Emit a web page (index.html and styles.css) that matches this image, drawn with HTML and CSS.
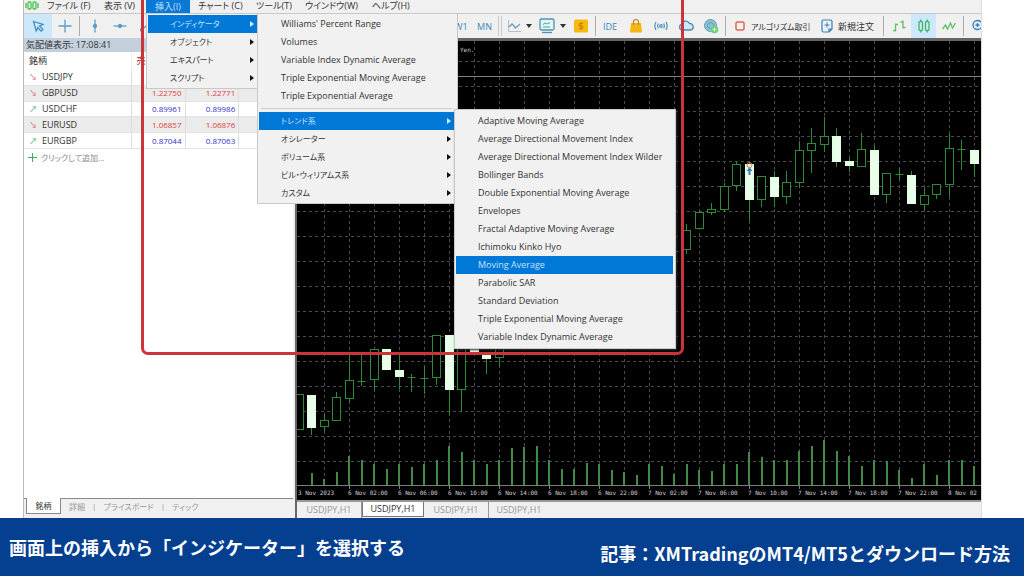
FILE: index.html
```html
<!DOCTYPE html>
<html lang="ja">
<head>
<meta charset="utf-8">
<title>画面上の挿入から「インジケーター」を選択する</title>
<link rel="stylesheet" href="styles.css">
</head>
<body>
<main class="app">
  <nav class="menubar">
    <svg class="logo" width="14" height="12" viewBox="0 0 14 12" fill="none" stroke="#45c14f" stroke-width="1.3"><rect x="3" y="2" width="3" height="7" rx="1"/><rect x="8" y="2" width="3" height="7" rx="1"/><path d="M1 3v5M13 3v5"/></svg>
    <button class="menu-title m-file">ファイル (F)</button>
    <button class="menu-title m-view">表示 (V)</button>
    <div class="menu-slot">
      <button class="menu-title open">挿入(I)</button>
      <ul class="menu menu-insert">
        <li class="has-sub"><button class="item active sub ja">インディケータ</button>
          <ul class="menu menu-indicator">
            <li><button class="item">Williams' Percent Range</button></li>
            <li><button class="item">Volumes</button></li>
            <li><button class="item">Variable Index Dynamic Average</button></li>
            <li><button class="item">Triple Exponential Moving Average</button></li>
            <li><button class="item">Triple Exponential Average</button></li>
            <li class="rule"></li>
            <li class="has-sub"><button class="item active sub ja">トレンド系</button>
              <ul class="menu menu-trend">
                <li><button class="item">Adaptive Moving Average</button></li>
                <li><button class="item">Average Directional Movement Index</button></li>
                <li><button class="item">Average Directional Movement Index Wilder</button></li>
                <li><button class="item">Bollinger Bands</button></li>
                <li><button class="item">Double Exponential Moving Average</button></li>
                <li><button class="item">Envelopes</button></li>
                <li><button class="item">Fractal Adaptive Moving Average</button></li>
                <li><button class="item">Ichimoku Kinko Hyo</button></li>
                <li><button class="item active">Moving Average</button></li>
                <li><button class="item">Parabolic SAR</button></li>
                <li><button class="item">Standard Deviation</button></li>
                <li><button class="item">Triple Exponential Moving Average</button></li>
                <li><button class="item">Variable Index Dynamic Average</button></li>
              </ul>
            </li>
            <li><button class="item sub ja">オシレーター</button></li>
            <li><button class="item sub ja">ボリューム系</button></li>
            <li><button class="item sub ja">ビル・ウィリアムス系</button></li>
            <li><button class="item sub ja">カスタム</button></li>
          </ul>
        </li>
        <li><button class="item sub ja">オブジェクト</button></li>
        <li><button class="item sub ja">エキスパート</button></li>
        <li><button class="item sub ja">スクリプト</button></li>
      </ul>
    </div>
    <button class="menu-title m-chart">チャート (C)</button>
    <button class="menu-title m-tool">ツール(T)</button>
    <button class="menu-title m-window">ウインドウ(W)</button>
    <button class="menu-title m-help">ヘルプ(H)</button>
  </nav>

  <div class="toolbar">
    <div class="tools-left">
      <button class="tool on" aria-label="カーソル"><svg width="16" height="16" viewBox="0 0 16 16" fill="none" stroke="#3f8fc4" stroke-width="1.300"><path d="M3.500 3.500l9.500 3-3.500 1.700 3.500 3.300-1.800 1.700-3.400-3.500-1.600 3.300z"/></svg></button>
      <button class="tool" aria-label="十字カーソル"><svg width="16" height="16" viewBox="0 0 16 16" stroke="#5b9cc8" stroke-width="1.300"><path d="M8 1.500v13M1.500 8h13"/></svg></button>
      <span class="bar"></span>
      <button class="tool" aria-label="垂直線"><svg width="16" height="16" viewBox="0 0 16 16" stroke="#5b9cc8" stroke-width="1.300" fill="#5b9cc8"><path d="M8 1.500v13"/><circle cx="8" cy="8" r="1.500"/></svg></button>
      <button class="tool" aria-label="水平線"><svg width="16" height="16" viewBox="0 0 16 16" stroke="#5b9cc8" stroke-width="1.300" fill="#5b9cc8"><path d="M1.500 8h13"/><circle cx="8" cy="8" r="1.500"/></svg></button>
      <button class="tool" aria-label="トレンドライン"><svg width="16" height="16" viewBox="0 0 16 16" stroke="#5b9cc8" stroke-width="1.300" fill="#5b9cc8"><path d="M4 13L14 3"/><circle cx="5" cy="12" r="1.500"/></svg></button>
    </div>
    <div class="tools-right">
      <button class="tool period">W1</button>
      <button class="tool period">MN</button>
      <span class="bar double"></span>
      <button class="tool drop" aria-label="チャート種類"><svg width="16" height="16" viewBox="0 0 16 16" fill="none"><path d="M2.500 2v11.500H15" stroke="#b9bec2"/><path d="M3 9l3-3 2 2 1.500 2L14 6" stroke="#6c9cba" stroke-width="1.300"/></svg></button>
      <button class="tool drop" aria-label="テンプレート"><svg width="18" height="18" viewBox="0 0 18 18" fill="none" stroke="#4d93b5" stroke-width="1.300"><rect x="2" y="2" width="14" height="11" rx="1.500" fill="#e4f3f8"/><path d="M5 7.500l2-1.500 2 1 3-1.500M5 10h7" stroke="#4caf85" stroke-width="1"/><path d="M4 15.500h10"/></svg></button>
      <button class="tool" aria-label="口座"><svg width="16" height="16" viewBox="0 0 16 16"><rect x="1" y="1.500" width="14" height="13" rx="1.500" fill="#f5b90f"/><path d="M10 5.500H7.200a1.200 1.200 0 0 0 0 2.500h1.600a1.200 1.200 0 0 1 0 2.500H6M8 4v8" fill="none" stroke="#c67b05"/></svg></button>
      <span class="bar"></span>
      <button class="tool period">IDE</button>
      <button class="tool" aria-label="マーケット"><svg width="16" height="16" viewBox="0 0 16 16"><path d="M3 5h10l1 9.500H2z" fill="#f4b70f"/><path d="M5.500 7V4a2.500 2.500 0 0 1 5 0v3" fill="none" stroke="#b8891a" stroke-width="1.200"/></svg></button>
      <button class="tool" aria-label="シグナル"><svg width="16" height="16" viewBox="0 0 16 16" fill="none" stroke="#4c91bd" stroke-width="1.200"><circle cx="8" cy="8" r="1.300"/><path d="M5.300 5.500q-1.500 2.500 0 5M10.700 5.500q1.500 2.500 0 5M3 4q-2.300 4 0 8M13 4q2.300 4 0 8"/></svg></button>
      <button class="tool" aria-label="クラウド"><svg width="16" height="16" viewBox="0 0 16 16" fill="#d2e7f5" stroke="#4c86b0" stroke-width="1.300"><path d="M4 12a3 3 0 0 1-.3-5.800A4.200 4.200 0 0 1 11.500 5.500a3.200 3.200 0 0 1 .8 6.500z"/></svg></button>
      <button class="tool" aria-label="VPS"><svg width="18" height="18" viewBox="0 0 18 18" fill="none"><circle cx="8.500" cy="8.500" r="6" fill="#8fc0d4" stroke="#5b9fb8"/><circle cx="8.500" cy="8.500" r="3" stroke="#5b9fb8"/><circle cx="12.500" cy="12.500" r="3.800" fill="#6ccf7a"/><path d="M10.500 12.500h4M12.500 10.500v4" stroke="#e8fbe8"/></svg></button>
      <span class="bar"></span>
      <button class="tool label ja"><svg width="14" height="14" viewBox="0 0 14 14" fill="none"><rect x="3" y="3" width="8" height="8" rx="1.500" stroke="#e0684f" stroke-width="1.500"/></svg>アルゴリズム取引</button>
      <button class="tool label"><svg width="14" height="14" viewBox="0 0 14 14" fill="none" stroke="#377fb8" stroke-width="1.200"><path d="M9 13H3.500A1.500 1.500 0 0 1 2 11.500v-9A1.500 1.500 0 0 1 3.500 1h7A1.500 1.500 0 0 1 12 2.500V10zM9 13v-3h3"/><path d="M4.500 6h5M7 3.500v5" stroke-width="1"/></svg>新規注文</button>
      <span class="bar"></span>
      <button class="tool" aria-label="バーチャート"><svg width="16" height="16" viewBox="0 0 16 16" fill="none" stroke="#5fc268" stroke-width="1.300"><path d="M4.500 5.500v8M2 12.500h2.500M4.500 6.500H7M12 2.500v8M9.500 4H12M12 9.500h2.500"/></svg></button>
      <button class="tool on" aria-label="ローソク足"><svg width="16" height="16" viewBox="0 0 16 16" fill="none" stroke="#3fb765" stroke-width="1.300"><rect x="3" y="3.500" width="3.500" height="9" rx="1"/><rect x="9.500" y="3.500" width="3.500" height="9" rx="1"/><path d="M4.750 1.500v2M4.750 12.500v2M11.250 1.500v2M11.250 12.500v2"/></svg></button>
      <button class="tool" aria-label="ラインチャート"><svg width="16" height="16" viewBox="0 0 16 16" fill="none" stroke="#5fc268" stroke-width="1.300"><path d="M1.500 11l3-4 2 4 3-6 2 5 3-5"/></svg></button>
      <span class="bar"></span>
      <button class="tool" aria-label="拡大"><svg width="16" height="16" viewBox="0 0 16 16" fill="#e1f0fa" stroke="#377fb8" stroke-width="1.300"><circle cx="7.500" cy="7" r="4.500"/><path d="M5.500 7h4M7.500 5v4M11 10.500l3.500 3.500"/></svg></button>
    </div>
  </div>

  <div class="workspace">
    <section class="watch">
      <h1 class="watch-title">気配値表示: 17:08:41</h1>
      <table class="quotes">
        <thead><tr><th class="sym">銘柄</th><th class="sell">売値</th><th></th><th></th></tr></thead>
        <tbody>
          <tr><td class="sym"><i class="dn">↘</i>USDJPY</td><td class="red"></td><td class="red"></td><td></td></tr>
          <tr class="alt"><td class="sym"><i class="dn">↘</i>GBPUSD</td><td class="red">1.22750</td><td class="red">1.22771</td><td></td></tr>
          <tr><td class="sym"><i class="up">↗</i>USDCHF</td><td class="blue">0.89961</td><td class="blue">0.89986</td><td></td></tr>
          <tr class="alt"><td class="sym"><i class="dn">↘</i>EURUSD</td><td class="red">1.06857</td><td class="red">1.06876</td><td></td></tr>
          <tr><td class="sym"><i class="up">↗</i>EURGBP</td><td class="blue">0.87044</td><td class="blue">0.87063</td><td></td></tr>
        </tbody>
      </table>
      <button class="add ja"><svg width="9" height="9" viewBox="0 0 9 9" stroke="#3fae58"><path d="M4.500 0v9M0 4.500h9"/></svg>クリックして追加...</button>
      <div class="watch-tabs ja">
        <button class="wtab current">銘柄</button>
        <button class="wtab">詳細</button><span class="pipe">|</span>
        <button class="wtab">プライスボード</button><span class="pipe">|</span>
        <button class="wtab">ティック</button>
      </div>
    </section>
    <section class="chart-pane">
      <svg class="chart" id="chart" role="img" aria-label="USDJPY,H1"></svg>
      <div class="chart-tabs">
        <button class="ctab">USDJPY,H1</button>
        <button class="ctab current">USDJPY,H1</button>
        <button class="ctab">USDJPY,H1</button>
        <button class="ctab last">USDJPY,H1</button>
      </div>
    </section>
  </div>
  <div class="highlight"></div>
</main>
<footer class="caption">
  <p class="caption-step">画面上の挿入から「インジケーター」を選択する</p>
  <p class="caption-source">記事：XMTradingのMT4/MT5とダウンロード方法</p>
</footer>
<script src="chart.js"></script>
</body>
</html>
```
FILE: styles.css
```css
* { box-sizing: border-box; }
body {
  margin: 0;
  min-height: 100vh;
  display: flex;
  flex-direction: column;
  background: #fff;
  color: #333;
  font-family: "Open Sans", "Noto Sans CJK JP", sans-serif;
  font-size: 9px;
}
button {
  margin: 0;
  padding: 0;
  border: 0;
  background: none;
  color: inherit;
  font: inherit;
  font-feature-settings: "palt";
  white-space: nowrap;
}
ul { list-style: none; margin: 0; padding: 0; }
i { font-style: normal; }
.ja { font-size: 8px; }

.app {
  position: relative;
  flex: 1;
  display: flex;
  flex-direction: column;
  margin: 0 42px 0 23px;
  background: #f0f0f0;
  border-left: 1px solid #bbb;
  border-right: 1px solid #ddd;
}

/* Menu bar */
.menubar {
  display: flex;
  height: 13px;
  line-height: 12px;
}
.logo { margin: 0 8px 0 1px; }
.menu-title { height: 12px; text-align: left; }
.m-file { width: 57px; }
.m-view { width: 42px; }
.menu-slot { position: relative; width: 44px; }
.menu-slot > .open { width: 100%; height: 13px; background: #0a78d6; color: #bfe0fa; text-align: center; }
.m-chart { width: 58px; padding-left: 8px; }
.m-tool { width: 49px; padding-left: 8px; }
.m-window { width: 65px; padding-left: 8px; }
.m-help { padding-left: 10px; }

.menu {
  position: absolute;
  z-index: 2;
  padding: 1px;
  background: #f1f1f1;
  border: 1px solid #c9c9c9;
}
.menu-insert { top: 100%; left: 0; width: 113px; }
.menu-indicator { top: -2px; left: 100%; width: 201px; padding-right: 3px; }
.menu-trend { top: -3px; left: 100%; width: 222px; padding: 2px 2px 2px 1px; box-shadow: 1px 1px 2px #333; }
.has-sub { position: relative; }
.item {
  display: block;
  position: relative;
  width: 100%;
  height: 18px;
  padding-left: 22px;
  line-height: 18px;
  text-align: left;
}
.item.active { background: #0078d7; color: #c4e2fa; }
.sub::after {
  content: "";
  position: absolute;
  right: 3px;
  top: 6px;
  border: 3px solid transparent;
  border-left: 4px solid #111;
  border-right: 0;
}
.sub.active::after { border-left-color: #d8eefc; }
.rule { height: 1px; margin: 3px 2px; background: #ccc; }

/* Toolbar */
.toolbar {
  display: flex;
  height: 25px;
  border-top: 1px solid #c8c8c8;
  overflow: hidden;
}
.tools-left { display: flex; flex: none; width: 426px; }
.tools-right {
  display: grid;
  flex: 1;
  grid-template-columns: 22px 25px 5px 34px 32px 25px 4px 26px 25px 25px 25px 25px 4px 87px 66px 6px 25px 25px 25px 4px 25px;
}
.tool { display: flex; align-items: center; justify-content: center; height: 24px; }
.tools-left .tool { width: 25px; }
.tools-left .tool.on { width: 28px; }
.tool.on { background: #cde8fb; }
.period { color: #3a87bd; }
.drop { gap: 4px; }
.drop::after { content: ""; border: 3px solid transparent; border-top: 4px solid #333; border-bottom: 0; }
.label { justify-content: flex-start; padding-left: 6px; gap: 4px; }
.bar { justify-self: center; width: 1px; height: 20px; margin-top: 2px; background: #aaa; }
.tools-left .bar { margin-left: 2px; margin-right: 2px; }
.bar.double { width: 4px; background: none; border-left: 1px solid #ccc; border-right: 1px solid #ccc; }

/* Market watch */
.workspace { flex: 1; display: flex; min-height: 0; }
.watch { flex: none; width: 269px; display: flex; flex-direction: column; background: #fff; }
.watch-title {
  margin: 0;
  height: 14px;
  padding-left: 2px;
  line-height: 14px;
  font-size: 9px;
  font-weight: 400;
  background: #c3cfdb;
  font-feature-settings: "palt";
}
.quotes { width: 100%; height: 97px; border-collapse: collapse; table-layout: fixed; line-height: 12px; }
.quotes thead { height: 18px; }
.quotes th, .quotes td { padding: 0 3px 0 0; text-align: right; border-right: 1px solid #ddd; }
.quotes th { font-weight: 400; border-right-color: #eee; }
.quotes .sym { width: 107px; padding-left: 5px; text-align: left; }
.quotes .sell { width: 54px; padding-left: 5px; text-align: left; color: #a33; }
.quotes tbody td { border-bottom: 1px solid #e4e4e4; }
.quotes i { display: inline-block; width: 13px; font-size: 8px; }
.quotes .alt { background: #ebebeb; }
.quotes .red { color: #e2413d; font-size: 8px; }
.quotes .blue { color: #3730c8; font-size: 8px; }
.dn { color: #d9534f; }
.up { color: #3fae58; }
.add { display: flex; align-items: center; gap: 4px; align-self: flex-start; height: 16px; padding-left: 4px; color: #888; }
.watch-tabs {
  display: flex;
  align-items: flex-start;
  height: 20px;
  margin-top: auto;
  background: #f0f0f0;
  border-top: 1px solid #888;
  color: #999;
  line-height: 14px;
}
.wtab { height: 15px; padding: 0 6px; }
.wtab.current { width: 35px; height: 16px; margin: -1px 2px 0 2px; background: #fff; color: #333; border: 1px solid #888; border-top: 0; }
.pipe { padding: 0 1px; }

/* Chart */
.chart-pane { flex: 1; min-width: 0; display: flex; flex-direction: column; margin-left: 2px; border-left: 2px solid #666; border-top: 3px solid #666; }
.chart { display: block; flex: 1; width: 100%; min-height: 0; background: #000; border-bottom: 1px solid #000; }
.grid { stroke: #4a4a51; stroke-dasharray: 3 3; }
.line { stroke: #7d7d82; }
.hollow { fill: #000; stroke: #2f8a37; }
.solid { fill: #eaffea; stroke: #dfffdf; }
.wick { stroke: #2f8a37; }
.volume { stroke: #438a48; stroke-width: 2; }
.time { fill: #d0d0d0; font-family: "DejaVu Sans Mono", monospace; font-size: 6px; }
.chart-tabs { display: flex; height: 18px; border-top: 2px solid #999; background: #f0f0f0; color: #999; line-height: 16px; }
.ctab { width: 65px; border-right: 1px solid #999; height: 16px; }
.ctab.current { width: 62px; height: 15px; background: #fff; color: #333; border: 1px solid #777; border-top: 0; line-height: 14px; }
.ctab.last { width: 60px; border-right: 0; }

/* Callout frame over the menus */
.highlight {
  position: absolute;
  z-index: 5;
  top: -8px;
  left: 117px;
  width: 543px;
  height: 363px;
  border: 3px solid #cb343a;
  border-radius: 7px;
  pointer-events: none;
  clip-path: inset(8px 0 0 0);
}

.caption {
  display: flex;
  justify-content: space-between;
  min-height: 58px;
  padding: 15px 14px 9px 9px;
  background: #043f90;
  color: #fff;
  font-family: "Noto Sans CJK JP", sans-serif;
  font-size: 18px;
  font-weight: 700;
  line-height: 28px;
}
.caption p { margin: 0; }
.caption-source { align-self: flex-end; }
```
FILE: chart.js
```js
const NS = "http://www.w3.org/2000/svg";
const chart = document.getElementById("chart");
const STEP = 12.5;
const BASE = 444;

// Each candle: kind (h hollow, s solid, d doji), body top, body bottom, high, low
const candles = [
  "h 353 389 353 389", "s 354 387 354 394", "h 379 386 372 390", "h 356 380 351 380",
  "h 339 358 312 361", "d 340 340 314 345", "h 308 339 308 349", "s 308 329 308 329",
  "s 329 336 312 348", "d 336 336 333 351", "d 337 337 325 353", "h 294 337 294 344",
  "s 294 349 294 374", "h 304 349 304 371", "s 299 312 299 312", "s 312 318 312 333",
  "h 307 317 307 325", null, null, null, null, null, null, null, null, null, null, null, null, null,
  "d 210 210 209 211", "h 189 209 183 213", "h 171 188 170 188", "h 168 172 162 174",
  "h 145 169 142 171", "h 123 145 121 150", "s 123 159 121 180", "h 135 159 135 166",
  "s 136 156 130 166", "h 141 156 130 163", "h 109 142 100 147", "h 102 110 87 132",
  "h 95 104 76 111", "s 95 121 87 126", "s 120 125 116 131", "h 108 126 92 126",
  "s 109 154 104 154", "h 132 154 132 162", "d 133 133 127 139", "s 134 163 130 163",
  "h 154 164 147 169", "h 143 154 143 158", "h 107 144 93 156", "d 108 108 99 129",
  "s 109 123 109 136"
];
const volumes = [0, 12, 6, 13, 29, 25, 21, 16, 21, 18, 21, 25, 39, 33, 25, 21, 25, 37, 38, 39, 25, 16, 16, 22, 21, 15, 13, 10, 21, 19, 11, 21, 15, 14, 21, 21, 33, 28, 25, 25, 34, 39, 45, 34, 29, 19, 25, 24, 15, 7, 21, 10, 25, 25, 19];
const times = ["6 Nov 02:00", "6 Nov 06:00", "6 Nov 10:00", "6 Nov 14:00", "6 Nov 18:00", "6 Nov 22:00", "7 Nov 02:00", "7 Nov 06:00", "7 Nov 10:00", "7 Nov 14:00", "7 Nov 18:00", "7 Nov 22:00", "8 Nov 02"];

function add(tag, attrs, text) {
  const el = document.createElementNS(NS, tag);
  for (const key in attrs) el.setAttribute(key, attrs[key]);
  if (text) el.textContent = text;
  chart.appendChild(el);
}
function line(cls, x1, y1, x2, y2) {
  add("line", { class: cls, x1, y1, x2, y2 });
}

for (let k = 1; k < 28; k++) {
  const x = Math.round(2 + k * 25) + 0.5;
  line("grid", x, 0, x, BASE);
}
for (let y = 20.5; y < BASE; y += 25) line("grid", 0, y, "100%", y);
line("line", 0, 35.5, "100%", 35.5);

volumes.forEach((v, i) => {
  const x = Math.round(2 + i * STEP);
  if (v) line("volume", x, BASE - v, x, BASE);
});
candles.forEach((row, i) => {
  if (!row) return;
  const [kind, ...n] = row.split(" ");
  const [top, bottom, high, low] = n.map(Number);
  const x = Math.floor(2 + i * STEP) + 0.5;
  line("wick", x, high, x, low);
  if (kind === "d") line("wick", x - 4, top + 0.5, x + 4, top + 0.5);
  else add("rect", { class: kind === "h" ? "hollow" : "solid", x: x - 4, y: top + 0.5, width: 8, height: bottom - top - 1 });
});

add("circle", { cx: 452.5, cy: 124, r: 2.5, fill: "none", stroke: "#d9714f" });
add("path", { d: "M452.500 126l3 4h-2v4h-2v-4h-2z", fill: "#3b7fb0" });

line("line", 0, BASE + 0.5, "100%", BASE + 0.5);
add("text", { class: "time", x: 1, y: 454 }, "3 Nov 2023");
times.forEach((t, i) => {
  const x = 52 + i * 50;
  line("line", x + 0.5, BASE, x + 0.5, BASE + 4);
  add("text", { class: "time", x: x - 1, y: 454 }, t);
});
add("text", { class: "time", x: 163, y: 11 }, "Yen.");
```
